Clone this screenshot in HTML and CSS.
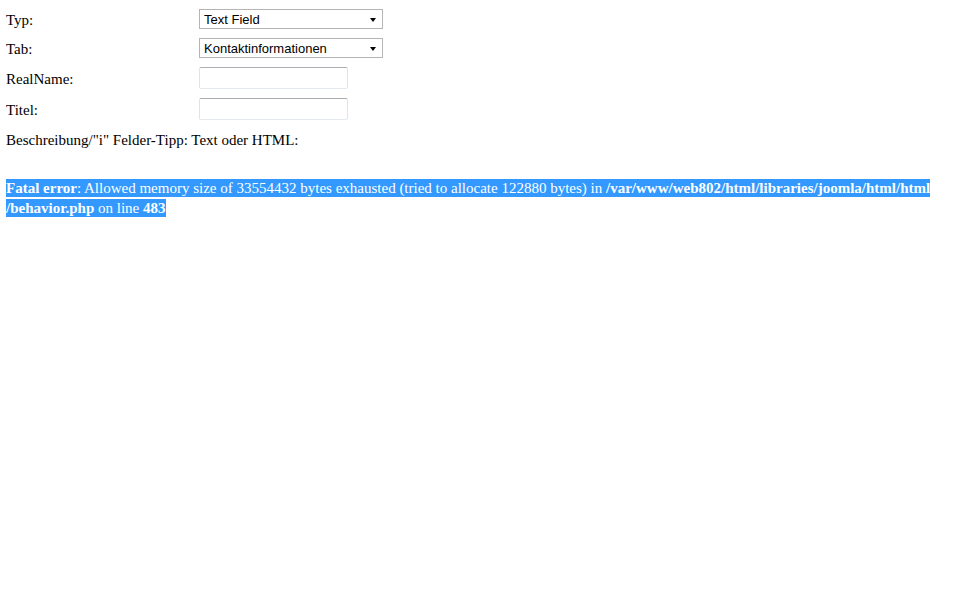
FILE: index.html
```html
<!DOCTYPE html>
<html>
  <head>
    <title>Feld bearbeiten</title>
    <link rel="stylesheet" href="styles.css">
  </head>
  <body>
    <form class="field-form">
      <label class="field-label">Typ:</label>
      <span class="select-wrap">
        <select class="field-select">
          <option>Text Field</option>
        </select>
      </span>

      <label class="field-label">Tab:</label>
      <span class="select-wrap">
        <select class="field-select">
          <option>Kontaktinformationen</option>
        </select>
      </span>

      <label class="field-label">RealName:</label>
      <input type="text" class="field-input" />

      <label class="field-label">Titel:</label>
      <input type="text" class="field-input" />

      <div class="field-desc">Beschreibung/"i" Felder-Tipp: Text oder HTML:</div>
    </form>

    <div class="php-error"><span class="selected"><b>Fatal error</b>: Allowed memory size of 33554432 bytes exhausted (tried to allocate 122880 bytes) in <b>/var/www/web802/html/libraries/joomla/html/html</b></span><br><span class="selected"><b>/behavior.php</b> on line <b>483</b></span></div>
  </body>
</html>
```

FILE: styles.css
```css
body {
  margin: 0;
  padding: 9px 6px 0 6px;
  font-family: "Liberation Serif", "Times New Roman", serif;
  font-size: 15px;
  color: #000;
  background: #fff;
}
.field-form {
  display: grid;
  grid-template-columns: 193px auto;
  row-gap: 9px;
  align-items: center;
  justify-items: start;
}
.field-label {
  line-height: 18px;
  padding-top: 2px;
}
.select-wrap {
  position: relative;
  display: inline-block;
}
.select-wrap::after {
  content: "";
  position: absolute;
  right: 7px;
  top: 9px;
  border-left: 3.5px solid transparent;
  border-right: 3.5px solid transparent;
  border-top: 4px solid #000;
  pointer-events: none;
}
.field-select {
  appearance: none;
  -webkit-appearance: none;
  width: 184px;
  height: 20px;
  margin: 0;
  padding: 0 0 0 4px;
  border: 1px solid #b4b4b4;
  border-radius: 0;
  background: #fff;
  font-family: "Liberation Sans", Arial, sans-serif;
  font-size: 13px;
  color: #000;
  outline: none;
}
.field-input {
  box-sizing: border-box;
  width: 149px;
  height: 22px;
  margin: 0;
  padding: 0 3px;
  border: 1px solid #e2e3ea;
  border-top-color: #abadb3;
  border-bottom-color: #e3e9ef;
  border-radius: 2px;
  background: #fff;
  font-family: "Liberation Sans", Arial, sans-serif;
  font-size: 13px;
}
.field-desc {
  grid-column: 1 / span 2;
  margin-top: 2px;
  line-height: 18px;
}
.php-error {
  margin-top: 29px;
  line-height: 20px;
  font-size: 15px;
}
.selected {
  background: #3399ff;
  color: #fff;
  padding: 1px 0;
}
```
